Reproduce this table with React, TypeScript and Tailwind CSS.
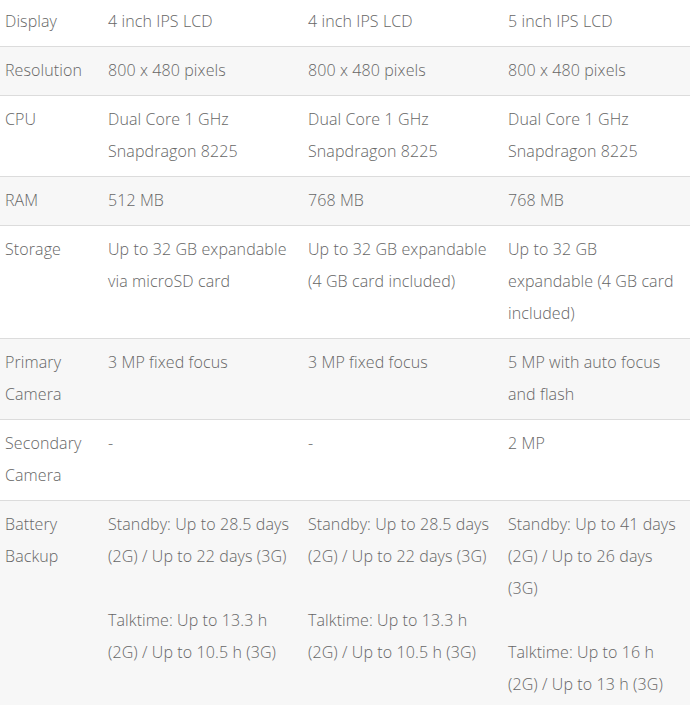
import { FunctionComponent } from 'react'

type Row = {
  label: string[]
  cells: string[][]
}

// each cell is a list of visual lines, '' is an empty line
const rows: Row[] = [
  { label: ['Display'], cells: [['4 inch IPS LCD'], ['4 inch IPS LCD'], ['5 inch IPS LCD']] },
  {
    label: ['Resolution'],
    cells: [['800 x 480 pixels'], ['800 x 480 pixels'], ['800 x 480 pixels']],
  },
  {
    label: ['CPU'],
    cells: [
      ['Dual Core 1 GHz', 'Snapdragon 8225'],
      ['Dual Core 1 GHz', 'Snapdragon 8225'],
      ['Dual Core 1 GHz', 'Snapdragon 8225'],
    ],
  },
  { label: ['RAM'], cells: [['512 MB'], ['768 MB'], ['768 MB']] },
  {
    label: ['Storage'],
    cells: [
      ['Up to 32 GB expandable', 'via microSD card'],
      ['Up to 32 GB expandable', '(4 GB card included)'],
      ['Up to 32 GB', 'expandable (4 GB card', 'included)'],
    ],
  },
  {
    label: ['Primary', 'Camera'],
    cells: [['3 MP fixed focus'], ['3 MP fixed focus'], ['5 MP with auto focus', 'and flash']],
  },
  { label: ['Secondary', 'Camera'], cells: [['-'], ['-'], ['2 MP']] },
  {
    label: ['Battery', 'Backup'],
    cells: [
      ['Standby: Up to 28.5 days', '(2G) / Up to 22 days (3G)', '', 'Talktime: Up to 13.3 h', '(2G) / Up to 10.5 h (3G)'],
      ['Standby: Up to 28.5 days', '(2G) / Up to 22 days (3G)', '', 'Talktime: Up to 13.3 h', '(2G) / Up to 10.5 h (3G)'],
      ['Standby: Up to 41 days', '(2G) / Up to 26 days', '(3G)', '', 'Talktime: Up to 16 h', '(2G) / Up to 13 h (3G)'],
    ],
  },
]

const Lines: FunctionComponent<{ lines: string[] }> = ({ lines }) => (
  <>
    {lines.map((line, i) => (
      <div key={i} className="h-8 whitespace-nowrap">
        {line}
      </div>
    ))}
  </>
)

const App: FunctionComponent = () => {
  return (
    <div className="w-[690px] overflow-hidden bg-white font-['Open_Sans',sans-serif] text-[16px] leading-8 font-light tracking-[0.1px] text-[#666]">
      <table className="-mt-[2px] w-[690px] table-fixed border-collapse">
        <colgroup>
          <col className="w-[103px]" />
          <col className="w-[200px]" />
          <col className="w-[200px]" />
          <col className="w-[187px]" />
        </colgroup>
        <tbody>
          {rows.map((row, r) => (
            <tr
              key={r}
              className={`border-b border-[#dcdcdc] ${r % 2 === 1 ? 'bg-[#f7f7f7]' : 'bg-white'}`}
            >
              <td className="px-[5px] pt-[7px] pb-[9px] align-top">
                <Lines lines={row.label} />
              </td>
              {row.cells.map((cell, c) => (
                <td key={c} className="px-[5px] pt-[7px] pb-[9px] align-top">
                  <Lines lines={cell} />
                </td>
              ))}
            </tr>
          ))}
        </tbody>
      </table>
    </div>
  )
}

export default App
